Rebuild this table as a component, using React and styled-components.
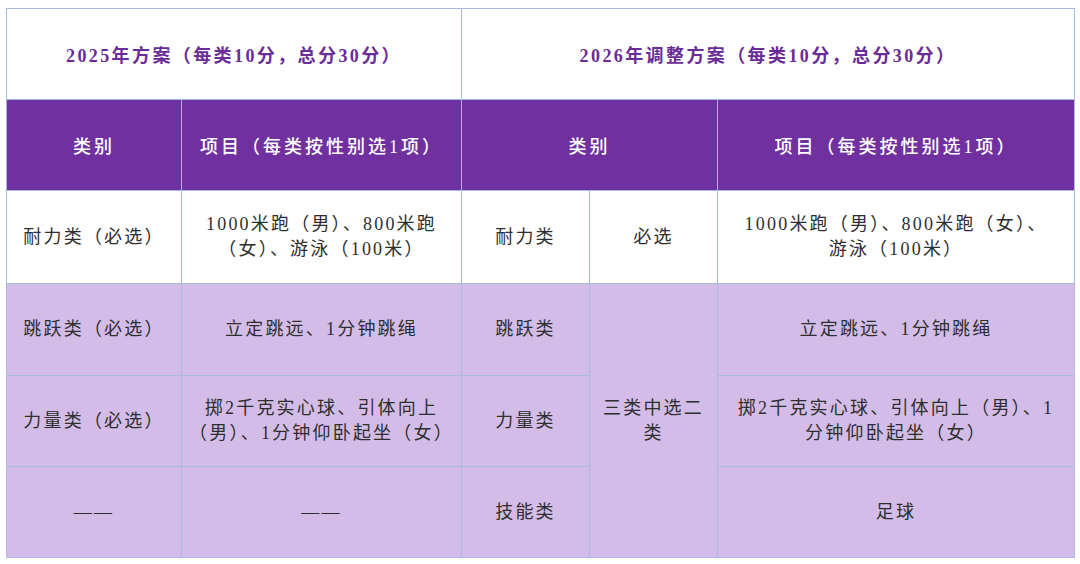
import React from 'react';
import styled, { createGlobalStyle } from 'styled-components';

const Global = createGlobalStyle`
  html, body {
    margin: 0;
    padding: 0;
    background: #ffffff;
  }
  body {
    font-family: "Liberation Serif", "Noto Sans CJK SC", serif;
  }
`;

const Page = styled.div`
  width: 1080px;
  height: 564px;
  padding: 8px 6px 0 6px;
  box-sizing: border-box;
`;

const Table = styled.table`
  width: 1068px;
  border-collapse: collapse;
  table-layout: fixed;
  border: 1px solid #a9b9e2;
`;

const TitleCell = styled.th`
  height: 88px;
  background: #ffffff;
  color: #6a2c96;
  font-size: 18px;
  font-weight: 700;
  letter-spacing: 2.4px;
  border: 1px solid #a9b9e2;
  text-align: center;
`;

const HeadCell = styled.th`
  height: 88px;
  background: #7030a0;
  color: #ffffff;
  font-size: 18px;
  font-weight: 500;
  letter-spacing: 3px;
  border: 1px solid #a9b9e2;
  text-align: center;
`;

const Row = styled.tr`
  height: ${({ $h }) => $h}px;
`;

const Cell = styled.td`
  padding: 0 ${({ $pad }) => ($pad ?? 8)}px;
  background: ${({ $tint }) => ($tint ? '#d3bde8' : '#ffffff')};
  color: #2e2e2e;
  font-size: 18px;
  line-height: 25px;
  letter-spacing: 2.2px;
  border: 1px solid #a9b9e2;
  text-align: center;
  vertical-align: middle;
`;

const widths = [175, 280, 128, 128, 357];

export default function App() {
  return (
    <Page>
      <Global />
      <Table>
        <colgroup>
          {widths.map((w, i) => (
            <col key={i} style={{ width: w }} />
          ))}
        </colgroup>
        <tbody>
          <tr>
            <TitleCell colSpan={2}>2025年方案（每类10分，总分30分）</TitleCell>
            <TitleCell colSpan={3}>2026年调整方案（每类10分，总分30分）</TitleCell>
          </tr>
          <tr>
            <HeadCell>类别</HeadCell>
            <HeadCell>项目（每类按性别选1项）</HeadCell>
            <HeadCell colSpan={2}>类别</HeadCell>
            <HeadCell>项目（每类按性别选1项）</HeadCell>
          </tr>
          <Row $h={93}>
            <Cell>耐力类（必选）</Cell>
            <Cell $pad={2}>1000米跑（男）、800米跑（女）、游泳（100米）</Cell>
            <Cell>耐力类</Cell>
            <Cell>必选</Cell>
            <Cell $pad={16}>
              1000米跑（男）、800米跑（女）、
              <br />
              游泳（100米）
            </Cell>
          </Row>
          <Row $h={92}>
            <Cell $tint>跳跃类（必选）</Cell>
            <Cell $tint $pad={2}>立定跳远、1分钟跳绳</Cell>
            <Cell $tint>跳跃类</Cell>
            <Cell $tint rowSpan={3}>三类中选二类</Cell>
            <Cell $tint $pad={16}>立定跳远、1分钟跳绳</Cell>
          </Row>
          <Row $h={91}>
            <Cell $tint>力量类（必选）</Cell>
            <Cell $tint $pad={2}>掷2千克实心球、引体向上（男）、1分钟仰卧起坐（女）</Cell>
            <Cell $tint>力量类</Cell>
            <Cell $tint $pad={16}>掷2千克实心球、引体向上（男）、1分钟仰卧起坐（女）</Cell>
          </Row>
          <Row $h={91}>
            <Cell $tint>——</Cell>
            <Cell $tint $pad={2}>——</Cell>
            <Cell $tint>技能类</Cell>
            <Cell $tint $pad={16}>足球</Cell>
          </Row>
        </tbody>
      </Table>
    </Page>
  );
}
